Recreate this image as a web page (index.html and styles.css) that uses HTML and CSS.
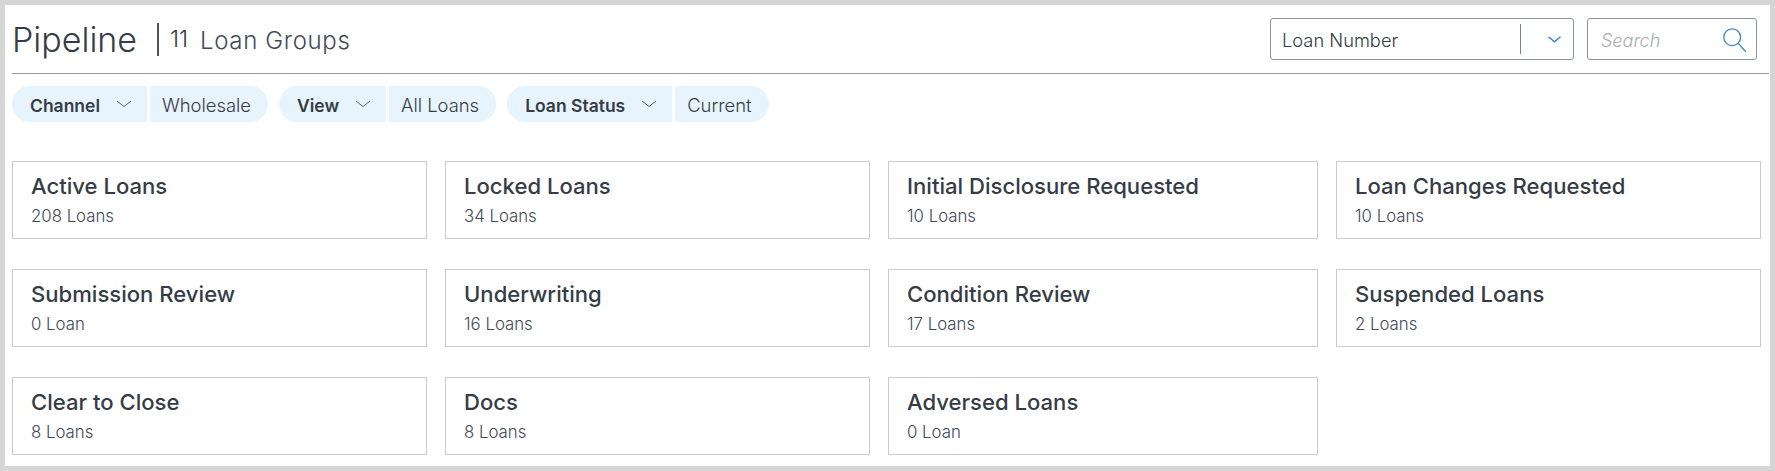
FILE: index.html
```html
<!DOCTYPE html>
<html lang="en">
<head>
<meta charset="utf-8">
<title>Pipeline</title>
<link rel="stylesheet" href="styles.css">
</head>
<body>
<main class="frame">
  <header class="top">
    <div class="heading">
      <h1 class="title">Pipeline</h1>
      <span class="count">11</span>
      <span class="count-label">Loan Groups</span>
    </div>
    <div class="tools">
      <div class="select">
        <span class="select-value">Loan Number</span>
        <span class="select-arrow">
          <svg width="13" height="7" viewBox="0 0 13 7"><path d="M.5.7 6.5 5.8 12.5.7" fill="none" stroke="#2f7fc4" stroke-width="1.3"/></svg>
        </span>
      </div>
      <div class="search">
        <span class="search-text">Search</span>
        <svg width="24" height="25" viewBox="0 0 24 25"><circle cx="9.2" cy="9.2" r="8.4" fill="none" stroke="#3a87c8" stroke-width="1.3"/><path d="M15.2 15.4 22.8 23.8" stroke="#3a87c8" stroke-width="1.3"/></svg>
      </div>
    </div>
  </header>
  <div class="filters">
    <div class="filter">
      <span class="filter-name">Channel<svg class="chev" width="16" height="8" viewBox="0 0 16 8"><path d="M1 1 8 6.5 15 1" fill="none" stroke="#5a6470" stroke-width="1"/></svg></span>
      <span class="filter-value">Wholesale</span>
    </div>
    <div class="filter">
      <span class="filter-name">View<svg class="chev" width="16" height="8" viewBox="0 0 16 8"><path d="M1 1 8 6.5 15 1" fill="none" stroke="#5a6470" stroke-width="1"/></svg></span>
      <span class="filter-value">All Loans</span>
    </div>
    <div class="filter">
      <span class="filter-name">Loan Status<svg class="chev" width="16" height="8" viewBox="0 0 16 8"><path d="M1 1 8 6.5 15 1" fill="none" stroke="#5a6470" stroke-width="1"/></svg></span>
      <span class="filter-value">Current</span>
    </div>
  </div>
  <section class="cards">
    <a class="card"><span class="card-title">Active Loans</span><span class="card-sub">208 Loans</span></a>
    <a class="card"><span class="card-title">Locked Loans</span><span class="card-sub">34 Loans</span></a>
    <a class="card"><span class="card-title">Initial Disclosure Requested</span><span class="card-sub">10 Loans</span></a>
    <a class="card"><span class="card-title">Loan Changes Requested</span><span class="card-sub">10 Loans</span></a>
    <a class="card"><span class="card-title">Submission Review</span><span class="card-sub">0 Loan</span></a>
    <a class="card"><span class="card-title">Underwriting</span><span class="card-sub">16 Loans</span></a>
    <a class="card"><span class="card-title">Condition Review</span><span class="card-sub">17 Loans</span></a>
    <a class="card"><span class="card-title">Suspended Loans</span><span class="card-sub">2 Loans</span></a>
    <a class="card"><span class="card-title">Clear to Close</span><span class="card-sub">8 Loans</span></a>
    <a class="card"><span class="card-title">Docs</span><span class="card-sub">8 Loans</span></a>
    <a class="card"><span class="card-title">Adversed Loans</span><span class="card-sub">0 Loan</span></a>
  </section>
</main>
</body>
</html>
```
FILE: styles.css
```css
* { box-sizing: border-box; }
html, body { margin: 0; height: 100%; }
body {
  background: #fff;
  color: #353c46;
  font-family: Inter, "Liberation Sans", sans-serif;
}
.frame {
  height: 471px;
  border: 5px solid #d6d6d6;
  padding: 0 1px 0 7px;
  overflow: hidden;
}
.top {
  display: flex;
  justify-content: space-between;
  height: 69px;
  border-bottom: 1px solid #9398a8;
  padding-top: 13px;
}
.heading { display: flex; align-items: center; height: 42px; }
.title {
  margin: 0;
  width: 145px;
  padding-top: 2px;
  font-size: 34px;
  font-weight: 300;
  line-height: 34px;
}
.count {
  width: 43px;
  height: 33px;
  font-size: 23px;
  font-weight: 300;
  border-left: 2px solid #4a5360;
  padding-left: 11px;
  line-height: 33px;
}
.count-label { padding-top: 2px; font-size: 24px; font-weight: 300; letter-spacing: .65px; color: #414b58; }
.tools { display: flex; gap: 13px; padding-right: 12px; }
.select, .search {
  height: 42px;
  border: 1px solid #8c93a5;
  border-radius: 3px;
  display: flex;
  align-items: center;
  background: #fff;
}
.select { width: 304px; padding-left: 11px; }
.select-value { flex: 1; padding-top: 1px; font-size: 18.3px; font-weight: 300; }
.select-arrow {
  width: 53px;
  height: 30px;
  border-left: 1px solid #7a8190;
  display: flex;
  align-items: center;
  padding-left: 27px;
}
.search { width: 170px; padding: 3px 9px 0 13px; justify-content: space-between; }
.search-text { font-size: 18px; font-style: italic; font-weight: 300; color: #a9adb5; }
.filters { display: flex; gap: 11px; padding-top: 12px; }
.filter { display: flex; gap: 3px; height: 36px; }
.filter-name, .filter-value {
  display: flex;
  align-items: center;
  background: #e8f4fd;
}
.filter-name {
  padding: 2px 15px 0 18px;
  border-radius: 18px 2px 2px 18px;
  font-size: 17.5px;
  font-weight: 600;
}
.filter-value {
  padding: 1px 17px 0 12px;
  border-radius: 2px 18px 18px 2px;
  font-size: 18.4px;
  font-weight: 300;
}
.chev { margin-top: -2px; margin-left: 16px; }
.cards {
  display: grid;
  grid-template-columns: 415px 425px 430px 425px;
  column-gap: 18px;
  row-gap: 30px;
  padding-top: 39px;
}
.card {
  display: flex;
  flex-direction: column;
  height: 78px;
  border: 1px solid #c9ccd1;
  padding: 9px 18px;
}
.card-title { margin-bottom: 2px; font-size: 22.1px; font-weight: 500; line-height: 30px; }
.card-sub { font-size: 16.8px; font-weight: 300; line-height: 26px; color: #3f4a57; }
```
